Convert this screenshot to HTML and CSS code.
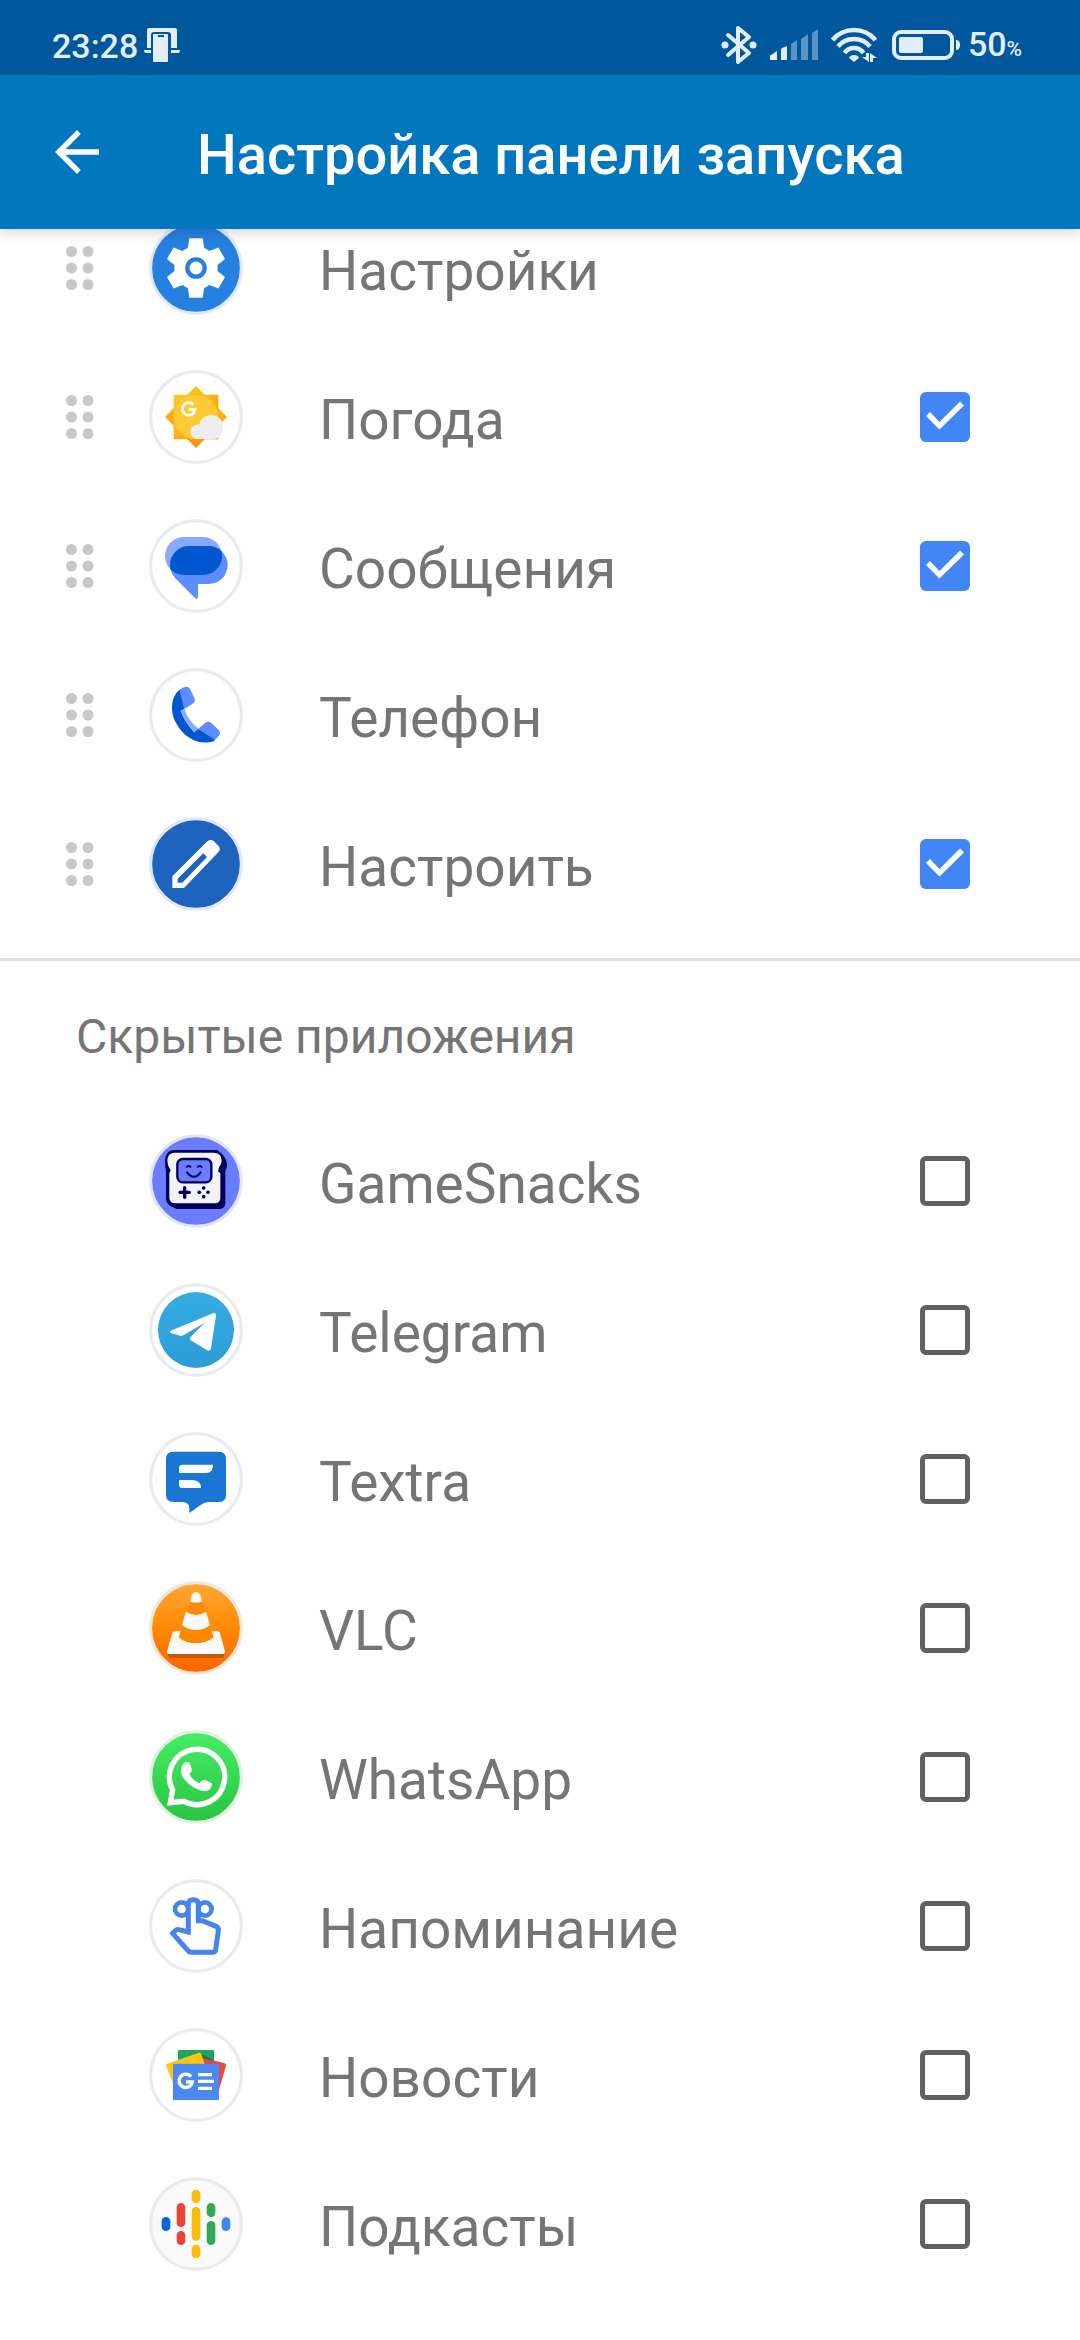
FILE: index.html
```html
<!DOCTYPE html>
<html lang="ru">
<head>
<meta charset="utf-8">
<meta name="viewport" content="width=device-width">
<title>Настройка панели запуска</title>
<link rel="stylesheet" href="styles.css">
</head>
<body>
<svg width="0" height="0" class="defs" aria-hidden="true">
  <defs>
    <symbol id="grip" viewBox="0 0 28 44">
      <circle cx="5.500" cy="5.500" r="5.500"/><circle cx="22" cy="5.500" r="5.500"/>
      <circle cx="5.500" cy="22" r="5.500"/><circle cx="22" cy="22" r="5.500"/>
      <circle cx="5.500" cy="38.500" r="5.500"/><circle cx="22" cy="38.500" r="5.500"/>
    </symbol>
  </defs>
</svg>

<header class="top">
  <div class="status">
    <div class="status-group">
      <span class="clock">23:28</span>
      <svg class="ico-cast" viewBox="0 0 36 34" width="36" height="34">
        <path d="M3 20V2Q3 0 5 0H31Q33 0 33 2V20H27V7Q27 4 24 4H10Q7 4 7 7V20Z"/>
        <path d="M0 22H7V25H2Q0 25 0 22ZM27 22H36Q36 25 34 25H27Z"/>
        <path fill-rule="evenodd" d="M10 6H23Q24 6 24 7V33Q24 34 23 34H10Q9 34 9 33V7Q9 6 10 6ZM14 7V9H20V7Z"/>
      </svg>
    </div>
    <div class="status-group">
      <svg class="ico-bt" viewBox="0 0 36 40" width="36" height="40">
        <path fill="none" stroke="currentColor" stroke-width="4" stroke-linejoin="round" stroke-linecap="round" d="M7 10L28 28L17 37V3L28 12L7 30"/>
        <circle cx="4" cy="20" r="3.500"/><circle cx="32" cy="20" r="3.500"/>
      </svg>
      <svg class="ico-signal" viewBox="0 0 48 32" width="48" height="32">
        <path d="M0 31V27Q0 26 1 26L7 22V31ZM11 31V21Q11 20 12 19L17 17V31Z"/>
        <path opacity=".4" d="M21 31V15L27 11V31ZM31 31V10L38 5V31ZM42 31V4L48 0V31Z"/>
      </svg>
      <svg class="ico-wifi" viewBox="0 0 46 36" width="46" height="36">
        <g fill="none" stroke="currentColor" stroke-width="4.500">
          <path d="M1.500 13Q10 3 23 3T44.500 13"/><path d="M7 19.500Q13 12 23 12T39 19.500"/><path d="M13.500 26Q17 21 23 21T32.500 26"/>
        </g>
        <path d="M23 28Q27 28 28 31L23 35L18 31Q19 28 23 28Z"/>
        <path d="M35 26H38V35L31 30H35ZM39 26L46 31H42V35H39Z"/>
      </svg>
      <svg class="ico-battery" viewBox="0 0 68 30" width="68" height="30">
        <rect x="2" y="2" width="58" height="26" rx="7" fill="none" stroke="currentColor" stroke-width="4"/>
        <rect x="7" y="7" width="24" height="16" rx="2"/>
        <path d="M64 10Q68 10 68 15T64 20Z"/>
      </svg>
      <span class="charge">50<small>%</small></span>
    </div>
  </div>
  <div class="appbar">
    <button class="back" type="button" aria-label="Назад">
      <svg viewBox="0 0 24 24" width="66" height="66"><path d="M20 11H7.830l5.590-5.590L12 4l-8 8 8 8 1.410-1.410L7.830 13H20v-2z"/></svg>
    </button>
    <h1 class="title">Настройка панели запуска</h1>
  </div>
</header>

<main class="content">
  <ul class="apps">
    <li class="app">
      <svg class="grip"><use href="#grip"/></svg>
      <svg class="logo" viewBox="-141 -141 282 282">
        <circle r="136" fill="#2680e0" stroke="#e1e8f3" stroke-width="9"/>
        <g fill="#fff"><circle r="65"/>
          <path id="tooth" d="M-20-89H20L26-50V50L20 89H-20L-26 50V-50Z"/>
          <use href="#tooth" transform="rotate(60)"/><use href="#tooth" transform="rotate(120)"/></g>
        <circle r="26" fill="#fff" stroke="#2680e0" stroke-width="13"/>
      </svg>
      <span class="name">Настройки</span>
    </li>
    <li class="app">
      <svg class="grip"><use href="#grip"/></svg>
      <svg class="logo" viewBox="-141 -141 282 282">
        <defs>
          <linearGradient id="sunA" x2="1" y2="1"><stop stop-color="#ffca28"/><stop offset="1" stop-color="#ff9100"/></linearGradient>
          <linearGradient id="sunB" x2="0" y2="1"><stop stop-color="#fbc516"/><stop offset="1" stop-color="#ff8f10"/></linearGradient>
        </defs>
        <circle r="136" fill="#fff" stroke="#e8eaed" stroke-width="9"/>
        <path fill="url(#sunB)" d="M0-93L93 0L0 93L-93 0Z"/>
        <path fill="url(#sunA)" d="M-67-67H67V67H-67Z"/>
        <circle r="67" fill="#fdca36"/>
        <path fill="none" stroke="#fff" stroke-width="8" d="M-8-37A19 19 0 1 0-3-23H-22"/>
        <path fill="#eee" d="M5 66A22 22 0 0 1-17 44Q-16 24 10 22A35 33 0 0 1 81 34Q80 66 55 66Z"/>
      </svg>
      <label class="name" for="a2">Погода</label>
      <input class="check" type="checkbox" id="a2" checked>
    </li>
    <li class="app">
      <svg class="grip"><use href="#grip"/></svg>
      <svg class="logo" viewBox="57 57 282 282">
        <defs><clipPath id="bubble"><rect x="105" y="111" width="171" height="114" rx="57"/></clipPath></defs>
        <circle cx="198" cy="198" r="136" fill="#fff" stroke="#e8eaed" stroke-width="9"/>
        <rect x="105" y="111" width="171" height="114" rx="57" fill="#88a9ff"/>
        <path id="talk" fill="#5b8dff" d="M178 138H236A57 57 0 0 1 236 252H204V291Q203 299 195 294L141 240Q120 220 120 195A57 57 0 0 1 178 138Z"/>
        <path clip-path="url(#bubble)" fill="#0057cf" d="M178 138H236A57 57 0 0 1 236 252H204L141 240Q120 220 120 195A57 57 0 0 1 178 138Z"/>
      </svg>
      <label class="name" for="a3">Сообщения</label>
      <input class="check" type="checkbox" id="a3" checked>
    </li>
    <li class="app">
      <svg class="grip"><use href="#grip"/></svg>
      <svg class="logo" viewBox="57 504 282 282">
        <circle cx="198" cy="645" r="136" fill="#fff" stroke="#e8eaed" stroke-width="9"/>
        <path fill="#0057cf" d="M152 567C121 588 119 638 140 672C162 712 205 738 252 724L256 716L204 686L193 697Q165 668 152 632L163 627Z"/>
        <path fill="#88a9ff" d="M152 632L163 627Q175 662 205 686L193 697Q165 668 152 632Z"/>
        <path fill="#5b8dff" d="M151 568Q160 561 169 560Q177 560 180 566L193 594Q197 603 190 610L163 627Q156 600 150 578ZM205 686L225 669Q235 662 244 669L266 690Q273 698 268 706Q263 714 254 719Z"/>
      </svg>
      <span class="name">Телефон</span>
    </li>
    <li class="app">
      <svg class="grip"><use href="#grip"/></svg>
      <svg class="logo" viewBox="57 51 282 282">
        <circle cx="198" cy="192" r="136" fill="#1e63bd" stroke="#e1e8f3" stroke-width="9"/>
        <path fill="#fff" fill-rule="evenodd" d="M127 264V229L232 124Q242 116 252 124L265 137Q274 147 265 157L162 264ZM143 248H157L231 171L220 160L143 236Z"/>
      </svg>
      <label class="name" for="a5">Настроить</label>
      <input class="check" type="checkbox" id="a5" checked>
    </li>
  </ul>

  <section class="hidden-apps">
    <h2 class="caption">Скрытые приложения</h2>
    <ul class="apps">
      <li class="app">
        <svg class="logo" viewBox="57 72 282 282">
          <circle cx="198" cy="213" r="136" fill="#6b7dff" stroke="#e4e6f3" stroke-width="9"/>
          <path fill="#00005a" d="M126 120H262Q292 142 291 165Q291 175 286 181V280Q285 297 268 297H140Q108 285 108 266V184Q105 170 105 155Q105 122 130 120Z"/>
          <path fill="#f3f3f6" d="M133 128H252Q275 129 275 152Q274 163 268 170L264 184L271 190V265Q270 280 255 280H135Q118 280 118 262V190L122 181Q113 168 112 154Q112 129 133 128Z"/>
          <rect x="142" y="147" width="102" height="70" rx="16" fill="#6b7dff" stroke="#00005a" stroke-width="7"/>
          <g fill="none" stroke="#00005a" stroke-linecap="round" stroke-width="6"><path d="M171 187Q192 214 212 187"/><path stroke-width="5" d="M170 171Q176 165 182 171M203 171Q209 165 215 171"/></g>
          <path stroke="#00005a" stroke-width="10" stroke-linecap="round" d="M164 233V262M150 247H178"/>
          <g fill="#00005a"><circle cx="221" cy="234" r="5.500"/><circle cx="221" cy="260" r="5.500"/><circle cx="208" cy="247" r="5.500"/><circle cx="234" cy="247" r="5.500"/></g>
        </svg>
        <label class="name" for="b1">GameSnacks</label>
        <input class="check" type="checkbox" id="b1">
      </li>
      <li class="app">
        <svg class="logo" viewBox="57 519 282 282">
          <defs><linearGradient id="tg" x2="0" y2="1"><stop stop-color="#37abe3"/><stop offset="1" stop-color="#2a9dd6"/></linearGradient></defs>
          <circle cx="198" cy="660" r="136" fill="#fff" stroke="#e8eaed" stroke-width="9"/>
          <circle cx="198" cy="660" r="114" fill="url(#tg)"/>
          <path fill="#fff" d="M122 662L249 610Q259 607 258 617L243 715Q240 726 230 720L181 690Q177 687 182 681L224 638L160 676Q155 679 150 677L123 669Q117 666 122 662Z"/>
        </svg>
        <label class="name" for="b2">Telegram</label>
        <input class="check" type="checkbox" id="b2">
      </li>
      <li class="app">
        <svg class="logo" viewBox="57 66 282 282">
          <circle cx="198" cy="207" r="136" fill="#fff" stroke="#e8eaed" stroke-width="9"/>
          <path fill="#1a76d3" d="M130 125H266Q288 125 288 147V254Q288 276 266 276H237Q224 276 212 285L178 309V296Q178 277 158 276H130Q108 275 108 254V147Q108 125 130 125Z"/>
          <path fill="#fff" d="M157 164H249Q249 189 228 189H147V174Q147 164 157 164ZM147 210H188Q213 212 213 234H157Q147 234 147 224Z"/>
        </svg>
        <label class="name" for="b3">Textra</label>
        <input class="check" type="checkbox" id="b3">
      </li>
      <li class="app">
        <svg class="logo" viewBox="57 513 282 282">
          <defs><linearGradient id="vlc" x2="0" y2="1"><stop stop-color="#ffa732"/><stop offset=".5" stop-color="#ff8a05"/><stop offset="1" stop-color="#ff6200"/></linearGradient></defs>
          <circle cx="198" cy="654" r="136" fill="url(#vlc)" stroke="#efe6de" stroke-width="9"/>
          <path fill="#c85a05" d="M113 728H283L281 744H117Z"/>
          <path fill="#f9f9f9" d="M137 663H259Q268 663 270 670L285 724Q286 732 279 732H118Q110 732 111 724L127 670Q129 663 137 663Z"/>
          <path fill="#ff8800" d="M182 570H215L251 682Q230 700 198 700T146 682Z"/>
          <path fill="#f9f9f9" d="M181 575Q184 546 198 546T216 575Q198 580 181 575ZM168 605Q198 625 228 605L240 645Q222 660 198 660T156 645Z"/>
        </svg>
        <label class="name" for="b4">VLC</label>
        <input class="check" type="checkbox" id="b4">
      </li>
      <li class="app">
        <svg class="logo" viewBox="57 60 282 282">
          <defs><linearGradient id="wa" x2="0" y2="1"><stop stop-color="#47ec64"/><stop offset="1" stop-color="#29c443"/></linearGradient></defs>
          <circle cx="198" cy="201" r="136" fill="url(#wa)" stroke="#dff0e3" stroke-width="9"/>
          <path fill="none" stroke="#fff" stroke-width="16" d="M121 278L128 240A83 83 0 1 1 162 274Z"/>
          <path fill="#fff" d="M163 158Q170 154 178 157Q180 165 186 177Q187 183 178 192Q188 212 208 220Q217 209 223 209Q234 214 246 220Q246 233 238 239Q226 247 208 240Q173 227 156 197Q148 173 163 158Z"/>
        </svg>
        <label class="name" for="b5">WhatsApp</label>
        <input class="check" type="checkbox" id="b5">
      </li>
      <li class="app">
        <svg class="logo" viewBox="57 507 282 282">
          <circle cx="198" cy="648" r="136" fill="#fff" stroke="#e8eaed" stroke-width="9"/>
          <g fill="none" stroke="#4683ee" stroke-width="14">
            <ellipse cx="155" cy="597" rx="20" ry="20"/><ellipse cx="225" cy="597" rx="20" ry="20"/>
            <path fill="#fff" stroke-width="15" d="M175 666V582Q175 569 190 569T205 582V632H217L258 649Q266 653 265 662L257 719Q256 727 248 727H184Q178 727 174 722L128 670L137 661Q141 657 147 659Z"/>
          </g>
        </svg>
        <label class="name" for="b6">Напоминание</label>
        <input class="check" type="checkbox" id="b6">
      </li>
      <li class="app">
        <svg class="logo" viewBox="57 54 282 282">
          <circle cx="198" cy="195" r="136" fill="#fff" stroke="#e8eaed" stroke-width="9"/>
          <path fill="#1ea362" d="M148 120H248Q252 120 252 124V200H144V124Q144 120 148 120Z"/>
          <path fill="#e24a3f" d="M190 136L284 160Q289 162 288 167L267 240H190Z"/>
          <path fill="#13804c" d="M211 128L252 152L216 145Z"/>
          <path fill="#fdc416" d="M111 161L207 128Q212 127 214 132L240 210L129 220L108 167Q107 163 111 161Z"/>
          <rect x="129" y="161" width="138" height="109" rx="3" fill="#4a89f3"/>
          <path fill="none" stroke="#fff" stroke-width="10" d="M183 200A20 20 0 1 0 187 216H168"/>
          <path stroke="#fff" stroke-width="10" d="M204 194H246M204 214H252M204 235H246"/>
        </svg>
        <label class="name" for="b7">Новости</label>
        <input class="check" type="checkbox" id="b7">
      </li>
      <li class="app">
        <svg class="logo" viewBox="57 501 282 282">
          <circle cx="198" cy="642" r="136" fill="#fafafa" stroke="#e8eaed" stroke-width="9"/>
          <g fill="none" stroke-width="26" stroke-linecap="round">
            <path stroke="#0066d9" d="M108 634V650"/>
            <path stroke="#e94436" d="M153 592V638M153 676V692"/>
            <path stroke="#fbbc0a" d="M198 552V566M198 604V679M198 717V732"/>
            <path stroke="#34a853" d="M243 592V608M243 646V692"/>
            <path stroke="#4285f4" d="M288 635V650"/>
          </g>
        </svg>
        <label class="name" for="b8">Подкасты</label>
        <input class="check" type="checkbox" id="b8">
      </li>
    </ul>
  </section>
</main>
</body>
</html>
```
FILE: styles.css
```css
* {
  box-sizing: border-box;
}

body {
  margin: 0;
  background: #fefefe;
  color: #757575;
  font-family: Roboto, "Noto Sans", sans-serif;
}

svg {
  display: block;
  flex: none;
  fill: currentColor;
}

.defs {
  position: absolute;
}

.top {
  position: sticky;
  top: 0;
  z-index: 1;
  box-shadow: 0 2px 14px rgba(0, 0, 0, 0.2);
}

/* Status bar */
.status {
  display: flex;
  justify-content: space-between;
  align-items: center;
  height: 75px;
  padding: 14px 58px 0 52px;
  background: #00579c;
  color: #e3eefa;
}

.status-group {
  display: flex;
  align-items: center;
}

.clock,
.charge {
  padding-top: 3px;
  font-size: 34px;
  line-height: 40px;
  font-weight: 500;
}

.ico-cast {
  margin-left: 6px;
}

.ico-signal,
.ico-wifi {
  margin-left: 13px;
}

.ico-battery {
  margin-left: 15px;
}

.charge {
  margin-left: 8px;
}

.charge small {
  font-size: 21px;
}

/* App bar */
.appbar {
  display: flex;
  align-items: center;
  height: 154px;
  padding: 0 44px;
  background: #0277bd;
  color: #fff;
}

.back {
  padding: 0;
  border: 0;
  background: none;
  color: inherit;
}

.title {
  margin: 0 0 0 87px;
  padding-top: 6px;
  font-size: 56px;
  line-height: 64px;
  font-weight: 500;
}

/* The list is scrolled a little way under the app bar */
.content {
  margin-top: -36px;
}

.apps {
  margin: 0;
  padding: 0;
  list-style: none;
}

.app {
  display: flex;
  align-items: center;
  height: 149px;
  padding: 0 110px 0 66px;
}

.grip {
  width: 28px;
  height: 44px;
  margin-right: 55px;
  color: #c8c8c8;
}

.logo {
  width: 94px;
  height: 94px;
}

.name {
  flex: 1;
  margin-left: 76px;
  padding-top: 6px;
  font-size: 55px;
  line-height: 64px;
}

.check {
  appearance: none;
  flex: none;
  width: 50px;
  height: 50px;
  margin: 0;
  border: 5px solid #616161;
  border-radius: 6px;
}

.check:checked {
  border: 0;
  background: #4285f4;
}

.check:checked::before {
  content: "";
  display: block;
  height: 100%;
  background: #fff;
  clip-path: polygon(12% 49%, 39% 76%, 88% 28%, 80% 20%, 39% 61%, 20% 41%);
}

.hidden-apps {
  margin-top: 20px;
  border-top: 3px solid #e0e0e0;
}

.hidden-apps .app {
  padding-left: 149px;
}

.caption {
  margin: 0;
  padding: 48px 76px 41px;
  font-size: 48px;
  line-height: 56px;
  font-weight: 400;
}
```
